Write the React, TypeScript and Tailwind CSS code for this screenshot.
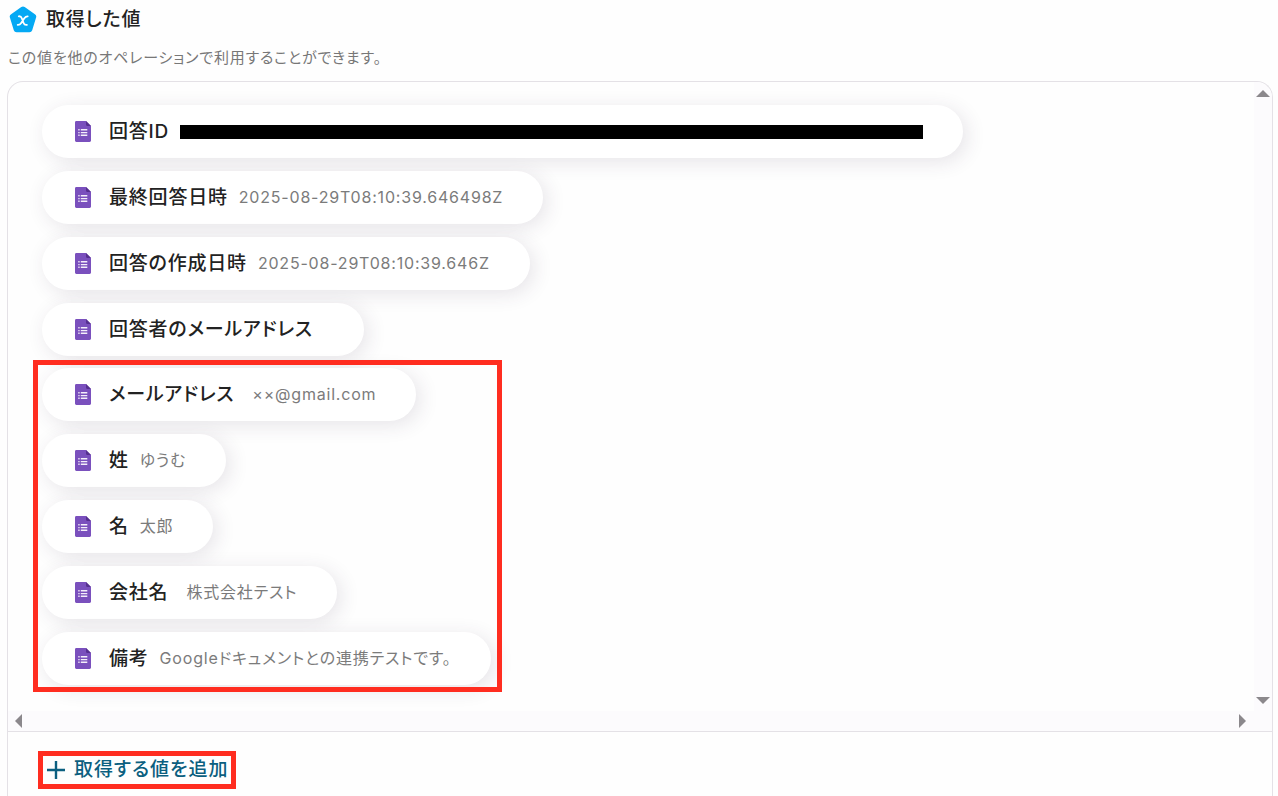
type Field = {
  label: string
  value?: string
  redacted?: boolean
  wideGap?: boolean
}

const systemFields: Field[] = [
  { label: '回答ID', redacted: true },
  { label: '最終回答日時', value: '2025-08-29T08:10:39.646498Z' },
  { label: '回答の作成日時', value: '2025-08-29T08:10:39.646Z' },
  { label: '回答者のメールアドレス', value: '' },
]

const formFields: Field[] = [
  { label: 'メールアドレス', value: '××@gmail.com', wideGap: true },
  { label: '姓', value: 'ゆうむ' },
  { label: '名', value: '太郎' },
  { label: '会社名', value: '株式会社テスト', wideGap: true },
  { label: '備考', value: 'Googleドキュメントとの連携テストです。' },
]

function PentagonIcon() {
  return (
    <svg width="28" height="28" viewBox="0 0 28 28" aria-hidden="true" className="shrink-0">
      <path
        d="M12.3 1.1a3 3 0 0 1 3.4 0l10.2 7.1a3 3 0 0 1 1.2 3.4l-3.9 12.6a3 3 0 0 1-2.9 2.1H7.7a3 3 0 0 1-2.9-2.100L.9 11.600a3 3 0 0 1 1.200-3.400z"
        fill="#04a9f4"
      />
      <path
        d="M9.800 10.300c1.700-.2 2.500.5 3 1.900l1.900 5.100c.5 1.300 1.300 1.900 3.200 1.600M18.700 10.300c-1.500-.1-2.400.6-3.400 1.900l-3.100 4.700c-.9 1.400-1.900 2.100-3.500 2"
        fill="none"
        stroke="#fff"
        strokeWidth="1.8"
        strokeLinecap="round"
      />
    </svg>
  )
}

function FormsIcon() {
  return (
    <svg width="16" height="21" viewBox="0 0 16 21" aria-hidden="true" className="shrink-0">
      <path d="M1.400 0H11l5 5v14.600c0 .8-.6 1.400-1.400 1.400H1.400C.6 21 0 20.400 0 19.600V1.400C0 .6.6 0 1.400 0z" fill="#7a50bd" />
      <path d="M11 0l5 5h-3.800C11.500 5 11 4.500 11 3.800z" fill="#56308f" />
      <path
        d="M3.300 8.100h1.300v1.300H3.300zM5.800 8.100h6.500v1.300H5.800zM3.300 10.900h1.300v1.300H3.300zM5.800 10.900h6.500v1.300H5.800zM3.300 13.600h1.300v1.300H3.300zM5.800 13.600h6.500v1.300H5.800z"
        fill="#f4effa"
      />
    </svg>
  )
}

function FieldPill({ field }: { field: Field }) {
  return (
    <li className="flex h-[53px] w-fit items-center rounded-full bg-white pr-10 pl-[33px] whitespace-nowrap shadow-[4px_4px_20px_rgba(60,40,70,0.12)]">
      <FormsIcon />
      <span className="ml-[18px] text-[19px] leading-7 font-medium text-[#222]">{field.label}</span>
      {field.redacted ? (
        <span className="ml-[11px] h-[14px] w-[743px] bg-black" />
      ) : (
        <span className={`${field.wideGap ? 'ml-[18px]' : 'ml-[11px]'} pb-[2px] text-base leading-6 text-[#7b7b7b]`}>
          {field.value}
        </span>
      )}
    </li>
  )
}

export default function App() {
  return (
    <div className="flex min-h-screen flex-col bg-[#fefefe] pt-1 pr-[5px] pl-[7px] font-['Inter','Noto_Sans_CJK_JP',sans-serif] tracking-wider [font-feature-settings:'palt']">
      <header className="pl-px">
        <h1 className="flex h-8 items-center gap-[9px] pl-px text-[19px] leading-7 font-medium text-[#222]">
          <PentagonIcon />
          取得した値
        </h1>
        <p className="mt-[10px] text-[15px] leading-6 text-[#777]">
          この値を他のオペレーションで利用することができます。
        </p>
      </header>

      <section className="mt-[11px] flex flex-1 flex-col rounded-t-2xl border border-b-0 border-[#e4e1e6]">
        <div className="grid grid-cols-[1fr_18px] grid-rows-[1fr_20px] border-b border-[#e4e1e6]">
          <div className="overflow-hidden pt-[23px] pb-[26px] pl-[34px]">
            <ul className="flex flex-col gap-[13px]">
              {systemFields.map((f) => (
                <FieldPill key={f.label} field={f} />
              ))}
            </ul>
            <div className="relative mt-3 w-fit">
              <ul className="flex flex-col gap-[13px]">
                {formFields.map((f) => (
                  <FieldPill key={f.label} field={f} />
                ))}
              </ul>
              <div className="pointer-events-none absolute -top-2 -right-[11px] -bottom-[7px] -left-[9px] border-[5px] border-[#ff2d20]" />
            </div>
          </div>

          <div className="flex flex-col items-center justify-between rounded-tr-2xl bg-[#fcfbfd] pt-2 pb-[7px]">
            <button type="button" aria-label="上へスクロール">
              <svg width="14" height="7" viewBox="0 0 14 7" fill="#8b888c" className="block">
                <path d="M0 7l7-7 7 7z" />
              </svg>
            </button>
            <button type="button" aria-label="下へスクロール">
              <svg width="14" height="7" viewBox="0 0 14 7" fill="#8b888c" className="block">
                <path d="M0 0h14L7 7z" />
              </svg>
            </button>
          </div>

          <div className="flex items-center justify-between bg-[#fcfbfd] pr-2 pl-[7px]">
            <button type="button" aria-label="左へスクロール">
              <svg width="7" height="14" viewBox="0 0 7 14" fill="#8b888c" className="block">
                <path d="M7 0v14L0 7z" />
              </svg>
            </button>
            <button type="button" aria-label="右へスクロール">
              <svg width="7" height="14" viewBox="0 0 7 14" fill="#8b888c" className="block">
                <path d="M0 0l7 7-7 7z" />
              </svg>
            </button>
          </div>
          <div className="bg-[#fcfbfd]" />
        </div>

        <div className="pt-[19px] pl-[30px]">
          <button
            type="button"
            className="flex h-[38px] items-center gap-[9px] border-[5px] border-[#ff2d20] pr-[3px] pl-1 text-[19px] leading-7 font-medium tracking-wider text-[#0b5f80]"
          >
            <svg width="18" height="18" viewBox="0 0 18 18" fill="#0b5f80" aria-hidden="true">
              <path d="M7.800 0h2.400v7.800H18v2.400h-7.800V18H7.800v-7.800H0V7.800h7.800z" />
            </svg>
            取得する値を追加
          </button>
        </div>
      </section>
    </div>
  )
}
